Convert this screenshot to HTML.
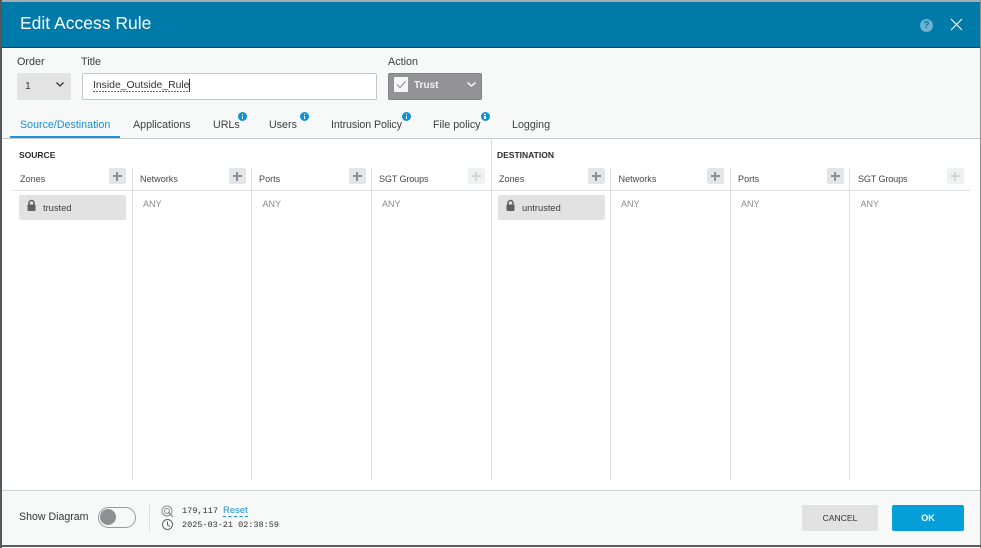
<!DOCTYPE html>
<html><head><meta charset="utf-8"><style>
html,body{margin:0;padding:0;background:#fff}
#p{position:relative;width:981px;height:548px;overflow:hidden;background:#fff;font-family:"Liberation Sans",sans-serif;color:#39393b;filter:blur(.3px)}
#p div,#p svg{position:absolute}
.t{white-space:nowrap;line-height:14px}
.l{font-size:10.800px;color:#3c3c3e}
.tab{font-size:10.700px;top:118px;color:#3f3f41}
.col{font-size:9.100px;top:171.500px;color:#47474a}
.any{font-size:9px;top:197px;color:#8a8a8c}
.vl{top:168px;width:1px;height:312px;background:#dfdfdf}
.plus{top:168px;width:17px;height:16px;background:#e4e5e6;border-radius:2px}
.plus:before{content:"";position:absolute;left:4px;top:7px;width:9px;height:2px;background:#8b9196}
.plus:after{content:"";position:absolute;left:7px;top:4px;width:2px;height:9px;background:#8b9196}
.plus.d{background:#f0f1f1}.plus.d:before,.plus.d:after{background:#d5d6d7}
.tag{top:195px;height:25px;background:#e2e2e3;border-radius:2px}
.i{width:9px;height:9px;border-radius:50%;background:#0b95d8;top:112px}
.i:before{content:"";position:absolute;left:3.700px;top:1.500px;width:1.600px;height:1.400px;background:#fff}
.i:after{content:"";position:absolute;left:3.700px;top:3.700px;width:1.600px;height:3.600px;background:#fff}
</style></head><body><div id="p">
<div style="left:0;top:48px;width:981px;height:91px;background:#f7f8f8"></div>
<div style="left:0;top:2px;width:981px;height:45px;background:#007aa8"></div>
<div style="left:0;top:47px;width:981px;height:1px;background:#043f7a"></div>
<div style="left:0;top:0;width:981px;height:2px;background:#a3aeb2"></div>
<div class="t" style="left:20px;top:12px;font-size:17.500px;line-height:22px;color:#fff">Edit Access Rule</div>
<div style="left:920px;top:19px;width:13px;height:13px;border-radius:50%;background:#6eb1d0"></div>
<div class="t" style="left:920px;top:19px;width:13px;text-align:center;font-size:10px;line-height:13px;font-weight:bold;color:#007aa8">?</div>
<svg style="left:950px;top:18px" width="13" height="13" viewBox="0 0 13 13"><path d="M1 1L12 12M12 1L1 12" stroke="#fff" stroke-width="1.100" fill="none"/></svg>

<div class="t l" style="left:17px;top:55px">Order</div>
<div class="t l" style="left:81px;top:55px">Title</div>
<div class="t l" style="left:388px;top:55px">Action</div>
<div style="left:17px;top:73px;width:54px;height:27px;background:#e3e3e4;border-radius:2px"></div>
<div class="t" style="left:25px;top:79px;font-size:10.500px">1</div>
<svg style="left:55px;top:81px" width="10" height="7" viewBox="0 0 10 7"><path d="M1.500 1.500L5 5L8.500 1.500" stroke="#333" stroke-width="1.300" fill="none"/></svg>
<div style="left:82px;top:73px;width:293px;height:25px;background:#fff;border:1px solid #c5c6c7;border-radius:2px"></div>
<div class="t" style="left:93px;top:79px;font-size:10.400px;color:#333">Inside_Outside_Rule</div>
<div style="left:93px;top:91px;width:97px;height:1px;background:repeating-linear-gradient(90deg,#e5333a 0 2px,transparent 2px 3px)"></div>
<div style="left:189px;top:79px;width:1px;height:13px;background:#333"></div>
<div style="left:388px;top:73px;width:92px;height:25px;background:#939396;border:1px solid #848487;border-radius:2px"></div>
<div style="left:394px;top:77px;width:14px;height:15px;background:#f6f6f6;border-radius:1px"></div>
<svg style="left:394px;top:77px" width="14" height="15" viewBox="0 0 14 15"><path d="M3 7.500L6 10.500L11.500 4.500" stroke="#8a8a8d" stroke-width="1.100" fill="none"/></svg>
<div class="t" style="left:414px;top:78.500px;font-size:10px;font-weight:bold;color:#f2f2f2">Trust</div>
<svg style="left:466px;top:81px" width="11" height="7" viewBox="0 0 11 7"><path d="M1.500 1.500L5.500 5L9.500 1.500" stroke="#f2f2f2" stroke-width="1.500" fill="none"/></svg>

<div class="t tab" style="left:20px;color:#1d8fd0">Source/Destination</div>
<div style="left:10px;top:136px;width:110px;height:2px;background:#1d93d6"></div>
<div class="t tab" style="left:133px">Applications</div>
<div class="t tab" style="left:213px">URLs</div><div class="i" style="left:238px"></div>
<div class="t tab" style="left:269px">Users</div><div class="i" style="left:300px"></div>
<div class="t tab" style="left:331px;letter-spacing:-.1px">Intrusion Policy</div><div class="i" style="left:402px"></div>
<div class="t tab" style="left:433px">File policy</div><div class="i" style="left:480.500px"></div>
<div class="t tab" style="left:512px">Logging</div>
<div style="left:0;top:138px;width:981px;height:1px;background:#c8c9ca"></div>

<div class="t" style="left:19px;top:148px;font-size:8.500px;font-weight:bold;color:#2c2c2e">SOURCE</div>
<div class="t" style="left:497px;top:148px;font-size:8.500px;font-weight:bold;color:#2c2c2e">DESTINATION</div>
<div style="left:491px;top:139px;width:1px;height:341px;background:#dcdcdc"></div>
<div class="vl" style="left:132px"></div><div class="vl" style="left:251px"></div><div class="vl" style="left:371px"></div>
<div class="vl" style="left:610px"></div><div class="vl" style="left:730px"></div><div class="vl" style="left:849px"></div>
<div style="left:13px;top:190px;width:957px;height:1px;background:#dfdfdf"></div>

<div class="t col" style="left:20px">Zones</div><div class="plus" style="left:109px"></div>
<div class="t col" style="left:140px">Networks</div><div class="plus" style="left:229px"></div>
<div class="t col" style="left:259px">Ports</div><div class="plus" style="left:349px"></div>
<div class="t col" style="left:379px;letter-spacing:-.15px">SGT Groups</div><div class="plus d" style="left:468px"></div>
<div class="t col" style="left:499px">Zones</div><div class="plus" style="left:588px"></div>
<div class="t col" style="left:618.500px">Networks</div><div class="plus" style="left:707px"></div>
<div class="t col" style="left:738px">Ports</div><div class="plus" style="left:827px"></div>
<div class="t col" style="left:858px;letter-spacing:-.15px">SGT Groups</div><div class="plus d" style="left:947px"></div>

<div class="tag" style="left:19px;width:107px"></div>
<svg style="left:26px;top:198.500px" width="11" height="13" viewBox="0 0 11 13"><path d="M3 6V4a2.500 2.500 0 0 1 5 0V6" stroke="#5f5f62" stroke-width="1.500" fill="none"/><rect x="1.500" y="5.500" width="8" height="6.500" rx="1" fill="#5f5f62"/></svg>
<div class="t" style="left:43px;top:200.500px;font-size:9.300px;color:#3c3c3e">trusted</div>
<div class="tag" style="left:498px;width:107px"></div>
<svg style="left:505px;top:198.500px" width="11" height="13" viewBox="0 0 11 13"><path d="M3 6V4a2.500 2.500 0 0 1 5 0V6" stroke="#5f5f62" stroke-width="1.500" fill="none"/><rect x="1.500" y="5.500" width="8" height="6.500" rx="1" fill="#5f5f62"/></svg>
<div class="t" style="left:522px;top:200.500px;font-size:9.300px;color:#3c3c3e">untrusted</div>
<div class="t any" style="left:143px">ANY</div><div class="t any" style="left:262.500px">ANY</div><div class="t any" style="left:382px">ANY</div>
<div class="t any" style="left:621px">ANY</div><div class="t any" style="left:741px">ANY</div><div class="t any" style="left:860.500px">ANY</div>

<div style="left:0;top:490px;width:981px;height:56px;background:#f7f8f8;border-top:1px solid #cfd0d1;box-sizing:border-box"></div>
<div class="t" style="left:19px;top:510px;font-size:10.600px;color:#333">Show Diagram</div>
<div style="left:98px;top:507px;width:36px;height:19px;border:1px solid #9a9a9c;border-radius:11px;background:#f7f8f8"></div>
<div style="left:100px;top:509px;width:16px;height:16px;border-radius:50%;background:#8f8f92"></div>
<div style="left:149px;top:505px;width:1px;height:27px;background:#dcdcdc"></div>
<svg style="left:161px;top:505px" width="13" height="13" viewBox="0 0 13 13"><circle cx="6" cy="6" r="5" stroke="#8a8a8c" fill="none"/><circle cx="6" cy="6" r="2.500" stroke="#8a8a8c" fill="none"/><path d="M7 7L12 12" stroke="#8a8a8c" stroke-width="1.200"/></svg>
<svg style="left:161px;top:518px" width="13" height="13" viewBox="0 0 13 13"><circle cx="6.500" cy="6.500" r="5" stroke="#616163" fill="none"/><path d="M6.500 3.500V7L9 8.500" stroke="#616163" fill="none"/></svg>
<div class="t" style="left:182px;top:504px;font-family:'Liberation Mono',monospace;font-size:8.600px;color:#333">179,117</div>
<div class="t" style="left:223px;top:506px;font-size:9.500px;color:#1d8fd0;border-bottom:1px dashed #1d8fd0;line-height:10px">Reset</div>
<div class="t" style="left:182px;top:518px;font-family:'Liberation Mono',monospace;font-size:8.500px;color:#333">2025-03-21 02:38:59</div>
<div style="left:802px;top:505px;width:76px;height:26px;background:#e2e2e3;border-radius:2px"></div>
<div class="t" style="left:802px;top:511px;width:76px;text-align:center;font-size:8.600px;color:#333">CANCEL</div>
<div style="left:892px;top:505px;width:72px;height:26px;background:#049fd9;border-radius:2px"></div>
<div class="t" style="left:892px;top:511px;width:72px;text-align:center;font-size:9px;font-weight:bold;color:#fff">OK</div>

<div style="left:0;top:0;width:2px;height:548px;background:#55585a"></div>
<div style="left:980px;top:0;width:1px;height:548px;background:#8d9092"></div>
<div style="left:0;top:545px;width:981px;height:2px;background:#5a5c5e"></div>
</div></body></html>
